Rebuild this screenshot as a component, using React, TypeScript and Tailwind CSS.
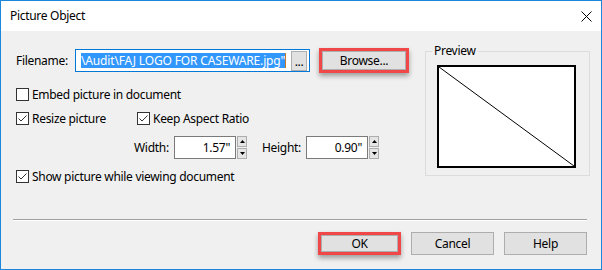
import type { ReactNode } from "react";

function CheckBox({ checked, children, className = "" }: { checked?: boolean; children: ReactNode; className?: string }) {
	return (
		<div className={`flex h-[13px] items-center ${className}`}>
			<span className="flex h-[13px] w-[13px] shrink-0 items-center justify-center border border-[#333333] bg-white">
				{checked && (
					<svg width="11" height="11" viewBox="0 0 11 11">
						<path d="M1.5 5.5 L4 8 L9.5 2.5" fill="none" stroke="#333333" strokeWidth="1" />
					</svg>
				)}
			</span>
			<span className="ml-[3px] whitespace-nowrap leading-[13px]">{children}</span>
		</div>
	);
}

function Spinner() {
	return (
		<div className="ml-px flex h-full w-[10px] flex-col gap-px">
			<div className="flex flex-1 items-center justify-center border border-[#adadad] bg-[#e5e5e5]">
				<svg width="5" height="3" viewBox="0 0 5 3">
					<path d="M0 3 L2.5 0 L5 3 Z" fill="#000" />
				</svg>
			</div>
			<div className="flex flex-1 items-center justify-center border border-[#adadad] bg-[#e5e5e5]">
				<svg width="5" height="3" viewBox="0 0 5 3">
					<path d="M0 0 L2.5 3 L5 0 Z" fill="#000" />
				</svg>
			</div>
		</div>
	);
}

function NumberBox({ value }: { value: string }) {
	return (
		<div className="flex h-[23px] items-stretch">
			<div className="flex w-[62px] items-center justify-end border border-[#7a7a7a] bg-white pr-[5px]">{value}</div>
			<Spinner />
		</div>
	);
}

function Button({ children, marked }: { children: ReactNode; marked?: boolean }) {
	if (marked) {
		return (
			<div className="h-[23px] w-[83px] border-[3px] border-[#f04848] shadow-[0_3px_5px_rgba(0,0,0,0.35)]">
				<div className="flex h-full w-full items-center justify-center border border-[#adadad] bg-[#e1e1e1]">
					{children}
				</div>
			</div>
		);
	}
	return (
		<div className="flex h-[23px] w-[83px] items-center justify-center border border-[#adadad] bg-[#e1e1e1]">
			{children}
		</div>
	);
}

export default function App() {
	return (
		<div className="flex h-[270px] w-[602px] flex-col border border-[#1c86dd] bg-[#f0f0f0] font-['Noto_Sans',sans-serif] text-[12px] tracking-[-0.3px] text-black">
			<div className="flex h-[30px] shrink-0 items-center justify-between bg-white pl-[9px] pr-[9px]">
				<span className="leading-[16px]">Picture Object</span>
				<svg width="11" height="11" viewBox="0 0 11 11">
					<path d="M0.5 0.5 L10.5 10.5 M10.5 0.5 L0.5 10.5" stroke="#000" strokeWidth="1" />
				</svg>
			</div>

			<div className="flex flex-col">
				<div className="mt-[12px] flex items-start pl-[15px]">
					<div className="mt-[5px] flex w-[393px] flex-col">
						<div className="flex h-[24px] items-start">
							<span className="w-[59px] pt-[5px] leading-[16px]">Filename:</span>
							<div className="mt-px flex h-[23px] w-[235px] items-center border border-[#0078d7] bg-white pl-[5px] pr-[2px]">
								<span className="whitespace-nowrap bg-[#3297fd] leading-[15px] tracking-[-0.15px] text-white">
									\Audit\FAJ LOGO FOR CASEWARE.jpg"
								</span>
								<span className="h-[15px] w-px bg-[#c8782a]" />
								<div className="ml-auto flex h-[20px] w-[16px] items-end justify-center border border-[#adadad] bg-[#e1e1e1] pb-[2px] leading-[12px]">
									...
								</div>
							</div>
							<div className="ml-[9px] h-[25px] w-[90px] border-[3px] border-[#f04848] shadow-[0_3px_5px_rgba(0,0,0,0.35)]">
								<div className="flex h-full w-full items-center justify-center border border-[#adadad] bg-[#e1e1e1]">
									Browse...
								</div>
							</div>
						</div>

						<CheckBox className="mt-[16px]">Embed picture in document</CheckBox>

						<div className="mt-[11px] flex">
							<CheckBox checked className="w-[121px]">
								Resize picture
							</CheckBox>
							<CheckBox checked>Keep Aspect Ratio</CheckBox>
						</div>

						<div className="mt-[11px] flex h-[23px] items-center pl-[118px]">
							<span className="w-[40px]">Width:</span>
							<NumberBox value={'1.57"'} />
							<span className="ml-[15px] w-[44px]">Height:</span>
							<NumberBox value={'0.90"'} />
						</div>

						<CheckBox checked className="mt-[11px]">
							Show picture while viewing document
						</CheckBox>
					</div>

					<fieldset className="ml-[16px] w-[165px] border border-[#dcdcdc] pb-[7px] pl-[11px] pt-[6px]">
						<legend className="-ml-[5px] px-[2px] leading-[16px]">Preview</legend>
						<div className="h-[103px] w-[139px] border-2 border-black bg-white">
							<svg className="h-full w-full" viewBox="0 0 100 100" preserveAspectRatio="none">
								<line x1="0" y1="0" x2="100" y2="100" stroke="#000" strokeWidth="1" vectorEffect="non-scaling-stroke" />
							</svg>
						</div>
					</fieldset>
				</div>

				<div className="ml-[12px] mr-[14px] mt-[36px]">
					<div className="h-px bg-[#a0a0a0]" />
					<div className="h-px bg-white" />
				</div>

				<div className="mr-[14px] mt-[11px] flex justify-end gap-[10px]">
					<Button marked>OK</Button>
					<Button>Cancel</Button>
					<Button>Help</Button>
				</div>
			</div>
		</div>
	);
}
